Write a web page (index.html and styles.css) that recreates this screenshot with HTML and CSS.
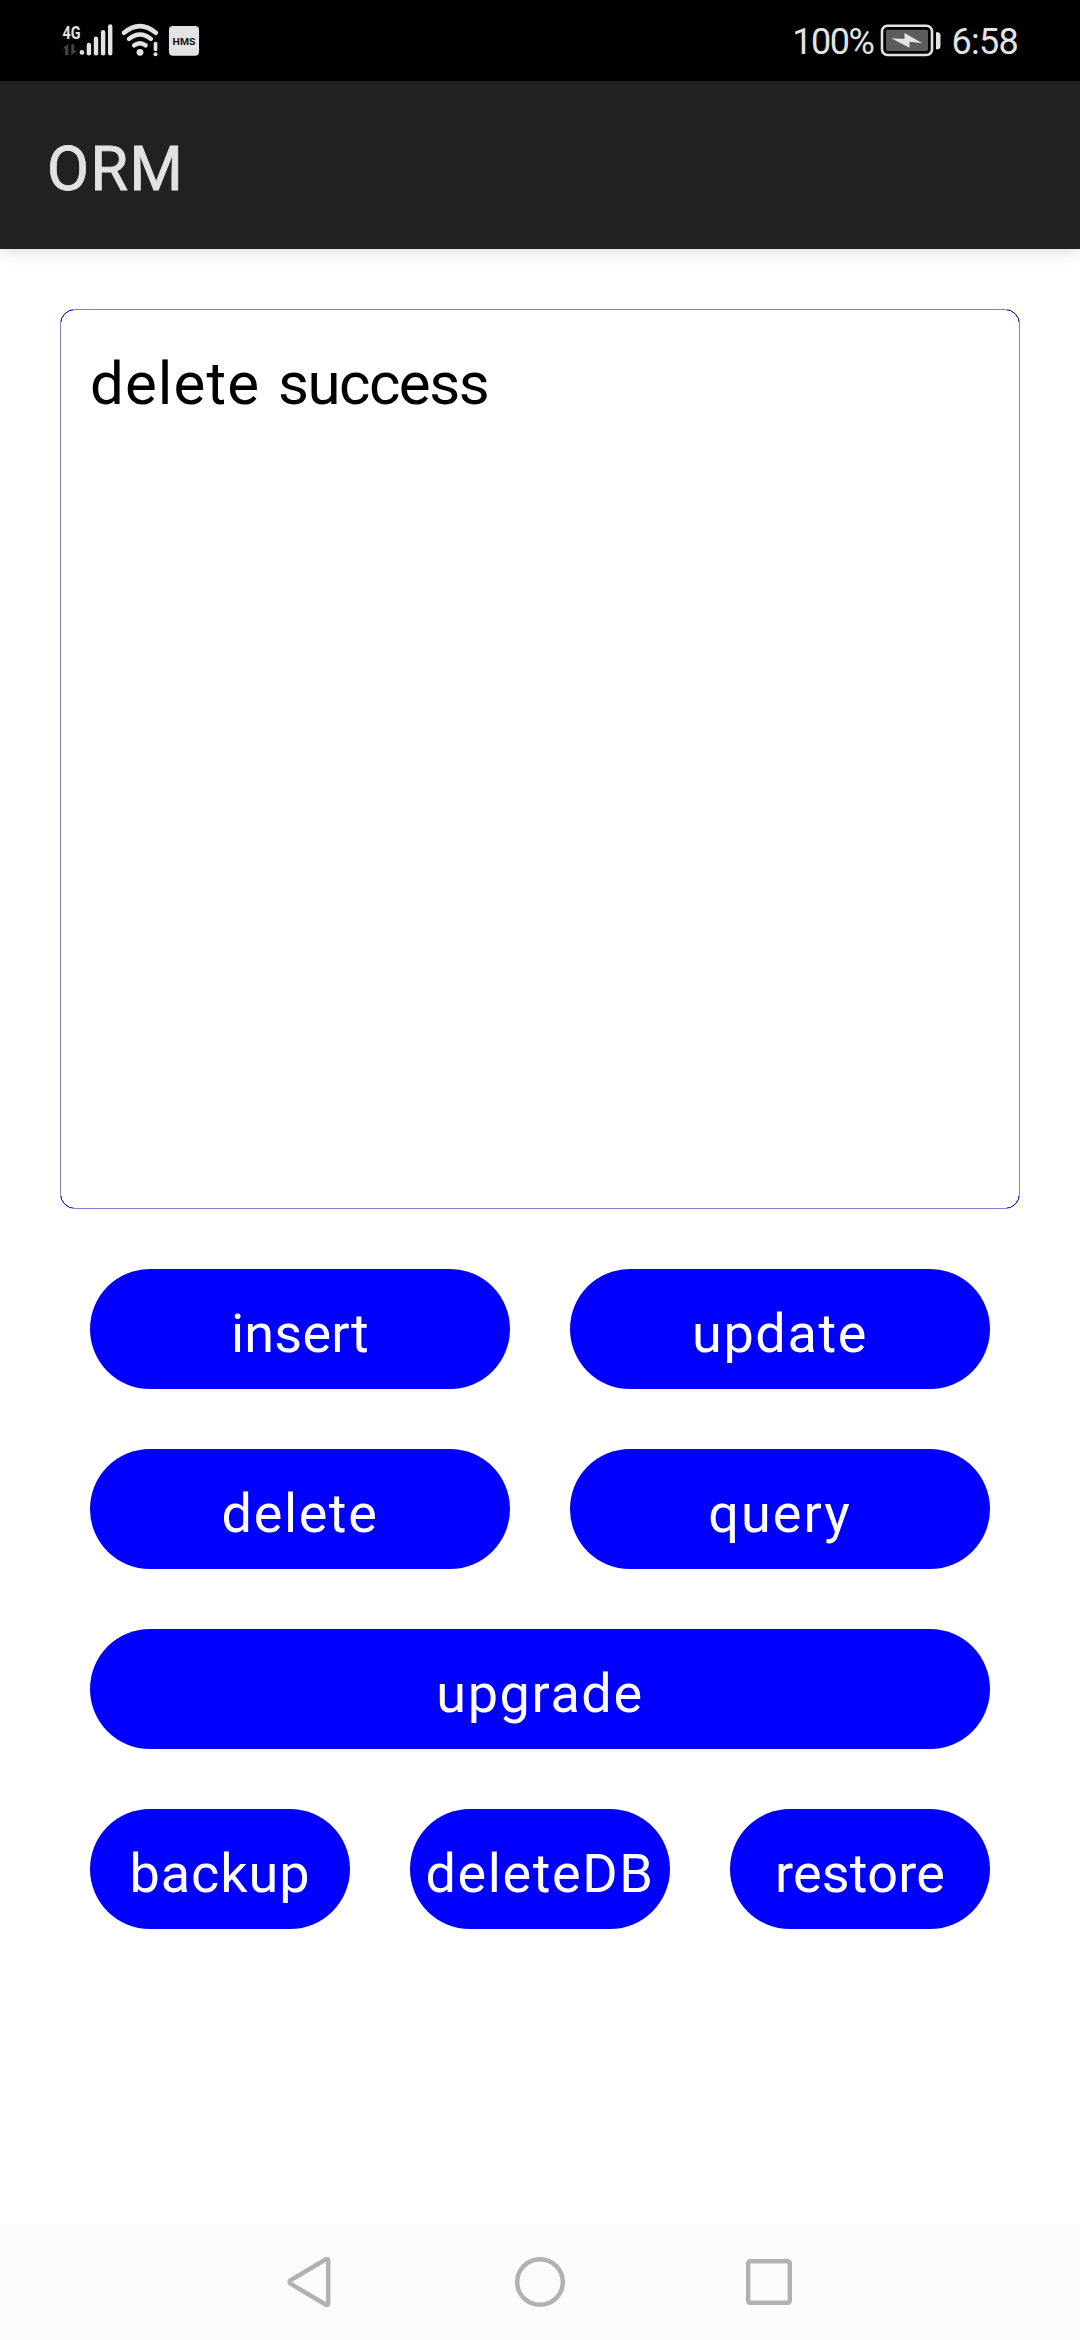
FILE: index.html
```html
<!DOCTYPE html>
<html lang="en">
<head>
<meta charset="utf-8">
<title>ORM</title>
<link rel="stylesheet" href="styles.css">
</head>
<body>
<div class="screen">
  <div class="status-bar">
    <svg class="status-icons" width="140" height="36" viewBox="60 22 140 36">
      <text class="network-type" x="62.5" y="38.5" textLength="18" lengthAdjust="spacingAndGlyphs">4G</text>
      <path class="data-arrows" d="M68.300 44v11h-3.200v-6.500h-2.600zM71.300 55.300v-11h3v6.500h2.800z"/>
      <g class="signal">
        <circle cx="81.900" cy="52.400" r="2.300"/>
        <rect x="86.700" y="42.700" width="4.400" height="12.700" rx="2.200"/>
        <rect x="93.800" y="36.500" width="4.400" height="18.900" rx="2.200"/>
        <rect x="100.900" y="30" width="4.400" height="25.400" rx="2.200"/>
        <rect x="108" y="24.300" width="4.400" height="31.100" rx="2.200"/>
      </g>
      <g class="wifi">
        <path d="M124 32.800Q139.900 19.500 155.800 32.800M129 38.900Q139.900 30 150.800 38.900M134.300 45.300Q139.900 41 145.500 45.300"/>
      </g>
      <circle class="solid" cx="140" cy="52.300" r="3.400"/>
      <rect class="solid" x="153.700" y="41.800" width="3.700" height="9.400" rx="1.800"/>
      <circle class="solid" cx="155.500" cy="54.200" r="2"/>
      <rect class="solid" x="169" y="26" width="30" height="29.800" rx="4"/>
      <text class="hms" x="172.600" y="44.800" textLength="22.800" lengthAdjust="spacingAndGlyphs">HMS</text>
    </svg>
    <div class="status-right">
      <span class="battery-level">100%</span>
      <svg class="battery" width="62" height="36" viewBox="880 22 62 36">
        <rect class="battery-case" x="882" y="25.700" width="50" height="29.300" rx="5.500"/>
        <rect class="battery-fill" x="886" y="29.800" width="42" height="21.200" rx="2"/>
        <path class="solid" d="M891.300 38.300 904.500 39V33L922.500 43.200 909.500 41.800V47.800z"/>
        <path class="solid" d="M936 32.200h1.500a3 3 0 0 1 3 3v11a3 3 0 0 1-3 3H936z"/>
      </svg>
      <span class="clock">6:58</span>
    </div>
  </div>
  <header class="app-bar"><h1 class="app-title">ORM</h1></header>
  <main class="content">
    <div class="output"><span class="output-action">delete</span> <span class="output-result">success</span></div>
    <div class="actions">
      <div class="row"><button class="action snug">insert</button><button class="action">update</button></div>
      <div class="row"><button class="action">delete</button><button class="action loose">query</button></div>
      <div class="row"><button class="action">upgrade</button></div>
      <div class="row"><button class="action medium">backup</button><button class="action">deleteDB</button><button class="action snug">restore</button></div>
    </div>
  </main>
  <nav class="nav-bar">
    <svg width="60" height="60" viewBox="0 0 60 60"><path d="M47.300 9.200Q47.300 6 44.500 7.500L9.500 28.300Q7.500 30 9.500 31.700L44.500 52.500Q47.300 54 47.300 50.800z"/></svg>
    <svg width="60" height="60" viewBox="0 0 60 60"><circle cx="30" cy="30" r="22.800"/></svg>
    <svg width="60" height="60" viewBox="0 0 60 60"><rect x="9.200" y="9.200" width="41.600" height="41.600" rx="2"/></svg>
  </nav>
</div>
</body>
</html>
```
FILE: styles.css
```css
* {
  box-sizing: border-box;
}

body {
  margin: 0;
  background: #fff;
  font-family: Roboto, "Noto Sans", sans-serif;
}

.screen {
  display: flex;
  flex-direction: column;
  width: 1080px;
  height: 2340px;
}

.status-bar {
  display: flex;
  justify-content: space-between;
  height: 81px;
  padding: 22px 62px 0 60px;
  background: #000;
  color: #e3e3e3;
}

.status-right {
  display: flex;
  height: 36px;
  font-size: 36px;
  line-height: 40px;
}

.battery-level {
  letter-spacing: -1.5px;
}

.clock {
  letter-spacing: -0.7px;
}

.battery {
  margin: 0 9px 0 7px;
}

.network-type {
  fill: #e3e3e3;
  font-size: 19px;
  font-weight: 700;
}

.data-arrows {
  fill: #444;
}

.signal,
.solid {
  fill: #e3e3e3;
}

.wifi {
  fill: none;
  stroke: #e3e3e3;
  stroke-width: 4.4;
  stroke-linecap: round;
}

.hms {
  fill: #111;
  font-size: 9.5px;
  font-weight: 700;
}

.battery-case {
  fill: none;
  stroke: #e3e3e3;
  stroke-width: 2.6;
}

.battery-fill {
  fill: #5c5c5c;
}

.app-bar {
  display: flex;
  align-items: center;
  height: 168px;
  padding: 8px 47px 0;
  background: #212121;
  box-shadow: 0 3px 14px rgba(0, 0, 0, 0.14);
}

.app-title {
  margin: 0;
  color: #e2e2e2;
  font-size: 61px;
  font-weight: 400;
  letter-spacing: 1.5px;
  -webkit-text-stroke: 0.9px #e2e2e2;
}

.content {
  flex: 1;
  padding: 60px 60px 0;
}

.output {
  position: relative;
  height: 900px;
  padding: 38px 29px;
  border: 1px solid #8080c4;
  border-radius: 15px;
  color: #000;
  font-size: 60px;
  line-height: 72px;
  word-spacing: 3px;
}

/* Deeper blue on the four rounded corners only */
.output::after {
  content: "";
  position: absolute;
  inset: -1px;
  border: 1px solid #0000b4;
  border-radius: 15px;
  mask:
    linear-gradient(#000, #000) 0 0 / 13px 13px no-repeat,
    linear-gradient(#000, #000) 100% 0 / 13px 13px no-repeat,
    linear-gradient(#000, #000) 0 100% / 13px 13px no-repeat,
    linear-gradient(#000, #000) 100% 100% / 13px 13px no-repeat;
}

.output-action {
  letter-spacing: 1.1px;
}

.output-result {
  letter-spacing: -1.5px;
}

.actions {
  display: flex;
  flex-direction: column;
  gap: 60px;
  padding: 60px 30px 0;
}

.row {
  display: flex;
  gap: 60px;
}

.action {
  flex: 1 1 0;
  min-width: 0;
  height: 120px;
  padding: 8px 0 0;
  border: 0;
  border-radius: 60px;
  background: #00f;
  color: #fff;
  font-family: inherit;
  font-size: 54px;
  letter-spacing: 1.6px;
  text-align: center;
  white-space: nowrap;
}

.snug {
  letter-spacing: 0.2px;
}

.medium {
  letter-spacing: 0.9px;
}

.loose {
  letter-spacing: 2px;
}

.nav-bar {
  display: flex;
  justify-content: space-between;
  height: 116px;
  padding: 28px 281px 0;
  background: #fcfcfc;
}

.nav-bar svg {
  fill: none;
  stroke: #b1b1b1;
  stroke-width: 4.4;
}
```
